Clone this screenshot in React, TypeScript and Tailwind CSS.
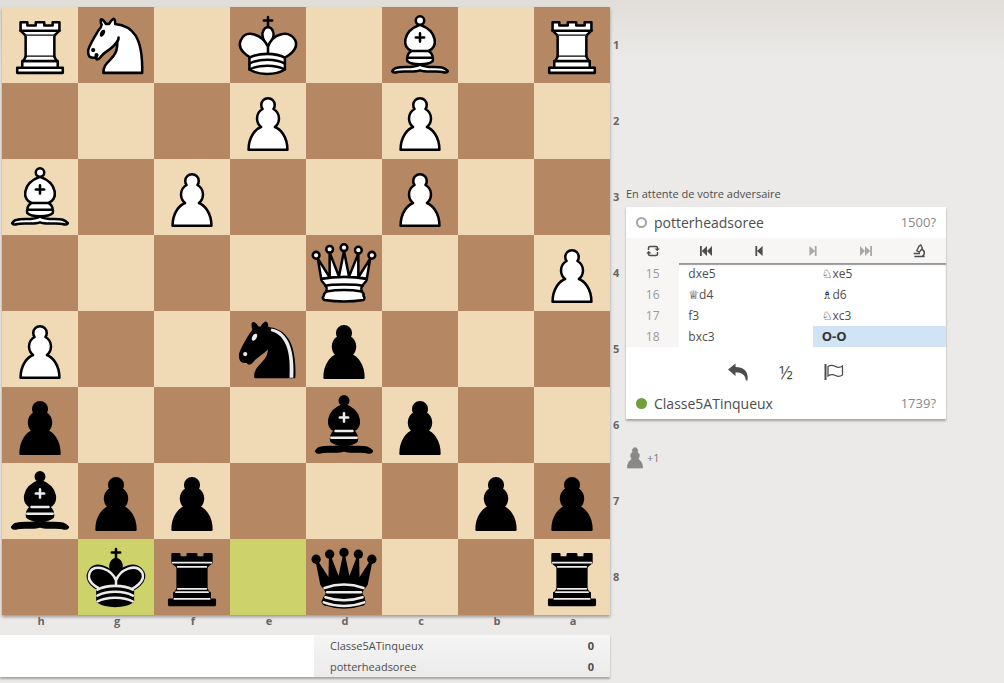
import React from "react";

const FILES = ["h", "g", "f", "e", "d", "c", "b", "a"];

// one string per rank, seen from black's side (rank 1 on top, file h on the left)
const RANKS = [
  "RN.K.B.R",
  "...P.P..",
  "B.P..P..",
  "....Q..P",
  "P..np...",
  "p...bp..",
  "bpp...pp",
  ".kr.q..r",
];

const LAST_MOVE = ["g8", "e8"];

const MOVES = [
  { n: 15, white: "dxe5", black: "♘xe5" },
  { n: 16, white: "♕d4", black: "♗d6" },
  { n: 17, white: "f3", black: "♘xc3" },
  { n: 18, white: "bxc3", black: "O-O" },
];

const NAMES: Record<string, string> = {
  p: "pawn",
  n: "knight",
  b: "bishop",
  r: "rook",
  q: "queen",
  k: "king",
};

const PAWN =
  "M22.5 9c-2.21 0-4 1.79-4 4 0 .89.29 1.71.78 2.38C17.33 16.5 16 18.59 16 21c0 2.03.94 3.84 2.41 5.03-3 1.06-7.41 5.55-7.41 13.47h23c0-7.92-4.41-12.41-7.41-13.47 1.47-1.19 2.41-3 2.41-5.03 0-2.41-1.33-4.5-3.28-5.62.49-.67.78-1.49.78-2.38 0-2.21-1.79-4-4-4z";

const Knight: React.FC<{ detail: string }> = ({ detail }) => (
  <>
    <path d="M22 10c10.5 1 16.5 8 16 29H15c0-9 10-6.5 8-21" />
    <path d="M24 18c.38 2.91-5.55 7.37-8 9-3 2-2.82 4.34-5 4-1.042-.94 1.41-3.04 0-3-1 0 .19 1.23-1 2-1 0-4.003 1-4-4 0-2 6-12 6-12s1.89-1.9 2-3.5c-.73-.994-.5-2-.5-3 1-1 3 2.5 3 2.5h2s.78-1.992 2.5-3c1 0 1 3 1 3" />
    <path fill={detail} stroke={detail} d="M9.5 25.5a.5.5 0 1 1-1 0 .5.5 0 1 1 1 0z" />
    <path
      fill={detail}
      stroke={detail}
      d="M14.933 15.75a.5 1.5 30 1 1-.866-.5.5 1.5 30 1 1 .866.5z"
    />
  </>
);

const Bishop: React.FC<{ detail: string }> = ({ detail }) => (
  <>
    <g strokeLinecap="butt">
      <path d="M9 36c3.39-.97 10.11.43 13.5-2 3.39 2.43 10.11 1.03 13.5 2 0 0 1.65.54 3 2-.68.97-1.65.99-3 .5-3.39-.97-10.11.46-13.5-1-3.39 1.46-10.11.03-13.5 1-1.354.49-2.323.47-3-.5 1.354-1.94 3-2 3-2z" />
      <path d="M15 32c2.5 2.5 12.5 2.5 15 0 .5-1.5 0-2 0-2 0-2.5-2.5-4-2.5-4 5.5-1.5 6-11.5-5-15.5-11 4-10.5 14-5 15.5 0 0-2.5 1.5-2.5 4 0 0-.5.5 0 2z" />
      <path d="M25 8a2.5 2.5 0 1 1-5 0 2.5 2.5 0 1 1 5 0z" />
    </g>
    <path
      fill="none"
      stroke={detail}
      strokeLinejoin="miter"
      d="M17.5 26h10M15 30h15m-7.5-14.5v5M20 18h5"
    />
  </>
);

const QUEEN_BODY =
  "M9 26c0 2 1.5 2 2.5 4 1 1.5 1 1 .5 3.5-1.5 1-1.5 2.5-1.5 2.5-1.5 1.5.5 2.5.5 2.5 6.5 1 16.5 1 23 0 0 0 1.5-1 0-2.5 0 0 .5-1.5-1-2.5-.5-2.5-.5-2 .5-3.5 1-2 2.5-2 2.5-4-8.5-1.5-18.5-1.5-27 0z";

const KING_BODY =
  "M11.5 37c5.5 3.5 15.5 3.5 21 0v-7s9-4.5 6-10.5c-4-6.5-13.5-3.5-16 4V27v-3.5c-3.5-7.5-13-10.5-16-4-3 6 5 10 5 10V37z";

const KING_BANDS =
  "M11.5 30c5.5-3 15.5-3 21 0m-21 3.5c5.5-3 15.5-3 21 0m-21 3.5c5.5-3 15.5-3 21 0";

const SHAPES: Record<string, React.ReactNode> = {
  P: <path d={PAWN} />,
  p: <path d={PAWN} />,
  N: <Knight detail="#000" />,
  n: (
    <>
      <Knight detail="#ececec" />
      <path
        fill="#ececec"
        stroke="none"
        d="M24.55 10.4l-.45 1.45.5.15c3.15 1 5.65 2.49 7.9 6.75S35.75 29.06 35.25 39l-.05.5h2.25l.05-.5c.5-10.06-.88-16.85-3.25-21.34-2.37-4.49-5.79-6.64-9.19-7.16l-.51-.1z"
      />
    </>
  ),
  B: <Bishop detail="#000" />,
  b: <Bishop detail="#ececec" />,
  R: (
    <>
      <path
        strokeLinecap="butt"
        d="M9 39h27v-3H9v3zM12 36v-4h21v4H12zM11 14V9h4v2h5V9h5v2h5V9h4v5"
      />
      <path d="M34 14l-3 3H14l-3-3" />
      <path strokeLinecap="butt" strokeLinejoin="miter" d="M31 17v12.5H14V17" />
      <path d="M31 29.5l1.5 2.5h-20l1.5-2.5" />
      <path fill="none" strokeLinejoin="miter" d="M11 14h23" />
    </>
  ),
  r: (
    <>
      <path
        strokeLinecap="butt"
        d="M9 39h27v-3H9v3zM12.5 32l1.5-2.5h17l1.5 2.5h-20zM12 36v-4h21v4H12z"
      />
      <path strokeLinecap="butt" strokeLinejoin="miter" d="M14 29.5v-13h17v13H14z" />
      <path
        strokeLinecap="butt"
        d="M14 16.5L11 14h23l-3 2.5H14zM11 14V9h4v2h5V9h5v2h5V9h4v5H11z"
      />
      <path
        fill="none"
        stroke="#ececec"
        strokeWidth="1"
        strokeLinejoin="miter"
        d="M12 35.5h21M13 31.5h19M14 29.5h17M14 16.5h17M11 14h23"
      />
    </>
  ),
  Q: (
    <>
      <path d="M8 12a2 2 0 1 1-4 0 2 2 0 1 1 4 0zM24.5 7.5a2 2 0 1 1-4 0 2 2 0 1 1 4 0zM41 12a2 2 0 1 1-4 0 2 2 0 1 1 4 0zM16 8.5a2 2 0 1 1-4 0 2 2 0 1 1 4 0zM33 9a2 2 0 1 1-4 0 2 2 0 1 1 4 0z" />
      <path
        strokeLinecap="butt"
        d="M9 26c8.5-1.5 21-1.5 27 0l2-12-7 11V11l-5.5 13.5-3-15-3 15-5.5-14V25L7 14l2 12z"
      />
      <path strokeLinecap="butt" d={QUEEN_BODY} />
      <path fill="none" d="M11.5 30c3.5-1 18.5-1 22 0M12 33.5c6-1 15-1 21 0" />
    </>
  ),
  q: (
    <>
      <g stroke="none">
        <circle cx="6" cy="12" r="2.75" />
        <circle cx="14" cy="9" r="2.75" />
        <circle cx="22.5" cy="8" r="2.75" />
        <circle cx="31" cy="9" r="2.75" />
        <circle cx="39" cy="12" r="2.75" />
      </g>
      <path
        strokeLinecap="butt"
        d="M9 26c8.5-1.5 21-1.5 27 0l2.5-12.5L31 25l-.3-14.1-5.2 13.6-3-14.5-3 14.5-5.2-13.6L14 25 6.5 13.5 9 26z"
      />
      <path strokeLinecap="butt" d={QUEEN_BODY} />
      <path fill="none" strokeLinecap="butt" d="M11 38.5a35 35 1 0 0 23 0" />
      <path
        fill="none"
        stroke="#ececec"
        d="M11 29a35 35 1 0 1 23 0M12.5 31.5h20M11.5 34.5a35 35 1 0 0 22 0M10.5 37.5a35 35 1 0 0 24 0"
      />
    </>
  ),
  K: (
    <>
      <path fill="none" strokeLinejoin="miter" d="M22.5 11.63V6M20 8h5" />
      <path
        strokeLinecap="butt"
        strokeLinejoin="miter"
        d="M22.5 25s4.5-7.5 3-10.5c0 0-1-2.5-3-2.5s-3 2.5-3 2.5c-1.5 3 3 10.5 3 10.5"
      />
      <path d={KING_BODY} />
      <path fill="none" d={KING_BANDS} />
    </>
  ),
  k: (
    <>
      <path fill="none" strokeLinejoin="miter" d="M22.5 11.63V6M20 8h5" />
      <path
        strokeLinecap="butt"
        strokeLinejoin="miter"
        d="M22.5 25s4.5-7.5 3-10.5c0 0-1-2.5-3-2.5s-3 2.5-3 2.5c-1.5 3 3 10.5 3 10.5"
      />
      <path d={KING_BODY} />
      <path
        fill="none"
        stroke="#ececec"
        d="M32 29.5s8.5-4 6.03-9.65C34.15 14 25 18 22.5 24.5l.01 2.1-.01-2.1C20 18 9.906 14 6.997 19.85c-2.497 5.65 4.853 9 4.853 9"
      />
      <path fill="none" stroke="#ececec" d={KING_BANDS} />
    </>
  ),
};

const Piece: React.FC<{ code: string }> = ({ code }) => {
  const white = code === code.toUpperCase();
  return (
    <svg
      viewBox="0 0 45 45"
      className="block h-full w-full"
      role="img"
      aria-label={`${white ? "white" : "black"} ${NAMES[code.toLowerCase()]}`}
      fill={white ? "#fff" : "#000"}
      fillRule="evenodd"
      stroke="#000"
      strokeWidth="1.5"
      strokeLinecap="round"
      strokeLinejoin="round"
    >
      {SHAPES[code]}
    </svg>
  );
};

const Board = () => (
  <div className="grid flex-1 grid-cols-8 shadow-[0_2px_3px_rgba(0,0,0,0.35)]">
    {RANKS.map((row, r) =>
      row.split("").map((code, f) => {
        const key = FILES[f] + (r + 1);
        let bg = (r + f) % 2 === 0 ? "bg-[#f0d9b5]" : "bg-[#b58863]";
        if (LAST_MOVE.includes(key)) bg = "bg-[#cdd26a]";
        return (
          <div key={key} className={`aspect-square ${bg}`}>
            {code !== "." && <Piece code={code} />}
          </div>
        );
      })
    )}
  </div>
);

const Crosstable = () => (
  <div className="mr-4 flex justify-end bg-white shadow-[0_2px_2px_rgba(0,0,0,0.3)]">
    <table className="w-[296px] bg-linear-to-b from-[#f5f5f5] to-[#ebebeb] text-[11px] leading-[21px] text-[#4d4d4d]">
      <tbody>
        {["Classe5ATinqueux", "potterheadsoree"].map((name) => (
          <tr key={name}>
            <th className="pl-4 text-left font-normal">
              <a href="#">{name}</a>
            </th>
            <td className="pr-4 text-right font-bold">0</td>
          </tr>
        ))}
      </tbody>
    </table>
  </div>
);

const Icon: React.FC<{ children: React.ReactNode }> = ({ children }) => (
  <svg viewBox="0 0 14 14" className="h-3.5 w-3.5" fill="currentColor" aria-hidden="true">
    {children}
  </svg>
);

const BUTTONS = [
  {
    label: "Retourner l'échiquier",
    icon: (
      <>
        <path
          fill="none"
          stroke="currentColor"
          strokeWidth="1.5"
          d="M2.5 6V4a1.500 1.500 0 0 1 1.500-1.500h6A1.500 1.500 0 0 1 11.500 4v1.500M11.500 8v2a1.500 1.500 0 0 1-1.500 1.500H4A1.500 1.500 0 0 1 2.500 10V8.500"
        />
        <path d="M8.500 4.600h5.300L11.300 7.200zM.2 9.400h5.300L2.700 6.800z" />
      </>
    ),
  },
  { label: "Début", icon: <path d="M1 2h1.8v10H1zM2.8 7L8 2v10zM8 7l5-5v10z" /> },
  { label: "Coup précédent", icon: <path d="M3.4 2h1.8v10H3.4zM5 7l5.6-5v10z" /> },
  { label: "Coup suivant", off: true, icon: <path d="M8.8 2h1.8v10H8.8zM9 7L3.4 2v10z" /> },
  { label: "Fin", off: true, icon: <path d="M11.2 2H13v10h-1.8zM11.2 7L6 2v10zM6 7L1 2v10z" /> },
  {
    label: "Analyse",
    icon: (
      <>
        <path
          fill="none"
          stroke="currentColor"
          strokeWidth="1.4"
          d="M7 2.200l1.800-1.200 1.600 3.200-3 4-2.600-1.400z"
        />
        <path
          fill="none"
          stroke="currentColor"
          strokeWidth="1.5"
          d="M9.600 5.600c3.400.8 3.600 5 .8 6.600M2.400 12.400h10.200M1.600 9.600h6.400"
        />
      </>
    ),
  },
];

const PlayerRow: React.FC<{ name: string; rating: string; online?: boolean }> = ({
  name,
  rating,
  online,
}) => (
  <div className="flex h-[31px] items-center px-2.5">
    <span
      className={
        online
          ? "h-[11px] w-[11px] rounded-full bg-[#6fa03a]"
          : "h-[11px] w-[11px] rounded-full border-2 border-[#a5a5a5]"
      }
    />
    <a href="#" className="ml-[7px] flex-1 text-sm text-[#4d4d4d]">
      {name}
    </a>
    <span className="text-[13px] text-[#888]">{rating}</span>
  </div>
);

// figurines come from a heavier symbol font than the rest of the notation
const San: React.FC<{ move: string }> = ({ move }) => {
  const figurine = "♕♗♘".includes(move[0]);
  if (!figurine) return <>{move}</>;
  return (
    <>
      <span className="font-['DejaVu_Sans'] text-xs leading-none font-bold text-black">
        {move[0]}
      </span>
      {move.slice(1)}
    </>
  );
};

const GamePanel = () => (
  <section className="bg-white shadow-[0_2px_2px_rgba(0,0,0,0.3)]">
    <PlayerRow name="potterheadsoree" rating="1500?" />
    <div className="grid h-[25px] grid-cols-6 bg-[#f7f6f5]">
      {BUTTONS.map((b) => (
        <button
          key={b.label}
          type="button"
          aria-label={b.label}
          disabled={b.off}
          className="flex items-center justify-center text-[#4d4d4d] disabled:text-[#a8a8a8]"
        >
          <Icon>{b.icon}</Icon>
        </button>
      ))}
    </div>
    <table className="w-full table-fixed text-xs leading-[21px] text-[#4d4d4d] shadow-[inset_0_2px_1px_rgba(0,0,0,0.4)]">
      <colgroup>
        <col className="w-1/6" />
        <col />
        <col />
      </colgroup>
      <tbody>
        {MOVES.map((m) => (
          <tr key={m.n}>
            <th className="bg-[#f7f6f5] text-center font-normal text-[#999]">{m.n}</th>
            <td className="pl-[9px]">
              <San move={m.white} />
            </td>
            <td
              className={
                m.black === "O-O"
                  ? "bg-[#d1e4f6] pl-[9px] text-[13px] leading-[21px] font-bold text-[#333]"
                  : "pl-[9px]"
              }
            >
              <San move={m.black} />
            </td>
          </tr>
        ))}
      </tbody>
    </table>
    <div className="flex h-[41px] items-center justify-center pt-2 text-[#4d4d4d]">
      <button type="button" aria-label="Proposer d'annuler" className="flex w-12 justify-center">
        <svg viewBox="0 0 20 18" className="h-[18px] w-5" fill="currentColor" aria-hidden="true">
          <path d="M0 6.500L7.500.5v3.600c8.500.2 13.300 4.400 12 13.400h-1.700C17.600 12 13.600 9.400 7.500 9.300v3.600z" />
        </svg>
      </button>
      <button type="button" aria-label="Proposer nulle" className="w-12 text-lg leading-6">
        ½
      </button>
      <button type="button" aria-label="Abandonner" className="flex w-12 justify-center">
        <svg
          viewBox="0 0 20 18"
          className="h-[18px] w-5"
          fill="none"
          stroke="currentColor"
          strokeWidth="1.3"
          aria-hidden="true"
        >
          <path d="M1.500 1v16" strokeWidth="2" />
          <path d="M4 3.500c3-2 5.500-1 7.500 0s4.500 1.200 7-.5v9c-2.500 1.700-5 1.500-7 .5S7 11 4 13z" />
        </svg>
      </button>
    </div>
    <PlayerRow name="Classe5ATinqueux" rating="1739?" online />
  </section>
);

const App: React.FC = () => {
  return (
    <div className="flex min-h-screen bg-[#edebe9] bg-[linear-gradient(to_bottom,#e1ddd9,#ebeae8_60px)] font-['Open_Sans','Noto_Sans','DejaVu_Sans',sans-serif] text-[#4d4d4d]">
      <main className="min-w-0 flex-1 pt-[7px]">
        <div className="flex pl-0.5">
          <Board />
          {/* rank numbers */}
          <div className="grid w-4 grid-rows-8 pl-[3px] text-[11px] font-bold text-[#666]">
            {RANKS.map((_, i) => (
              <span key={i} className="self-center">
                {i + 1}
              </span>
            ))}
          </div>
        </div>
        <div className="mr-[15px] mb-2 grid grid-cols-8 pl-[3px] text-center text-[11px] leading-3 font-bold text-[#666]">
          {FILES.map((f) => (
            <span key={f}>{f}</span>
          ))}
        </div>
        <Crosstable />
      </main>

      <aside className="mr-[58px] w-80 pt-[184px]">
        <p className="mb-[3px] text-[11px] leading-5">En attente de votre adversaire</p>
        <GamePanel />
        {/* captured material */}
        <div className="mt-7 flex items-center gap-[3px] text-[11px] text-[#777]">
          <svg viewBox="9 8 27 33" className="h-[22px] w-[18px]" fill="#888" aria-hidden="true">
            <path d={PAWN} stroke="#888" />
          </svg>
          <span>+1</span>
        </div>
      </aside>
    </div>
  );
};

export default App;
